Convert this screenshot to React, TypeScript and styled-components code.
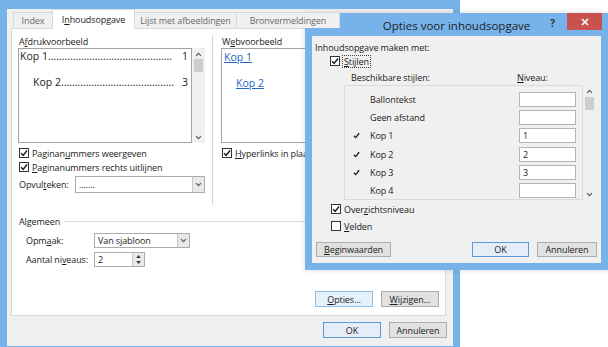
import React from 'react';
import styled, { createGlobalStyle } from 'styled-components';

const FRAME = '#77b3ea';

const GlobalStyle = createGlobalStyle`
  html, body { margin: 0; padding: 0; background: #fff; }
  body {
    font-family: "Open Sans", "Noto Sans", sans-serif;
    font-size: 9px;
    letter-spacing: -0.1px;
    color: #1b1b1b;
    overflow: hidden;
  }
  * { box-sizing: border-box; }
`;

const Page = styled.div`
  position: relative;
  width: 608px;
  height: 347px;
  overflow: hidden;
  background: #fff;
`;

/* ---------- main dialog ---------- */
const MainWindow = styled.div`
  width: 460px;
  height: 347px;
  background: ${FRAME};
  padding: 9px 7px 1px 7px;
  display: flex;
`;

const MainBody = styled.div`
  flex: 1;
  min-width: 0;
  background: #f0f0f0;
  display: flex;
  flex-direction: column;
  padding: 0 7px 0 4px;
`;

const TabStrip = styled.div`
  display: flex;
  align-items: flex-start;
  height: 20px;
  margin-bottom: -1px;
  padding-left: 2px;
  position: relative;
  z-index: 1;
`;

const Tab = styled.div<{ $w: number; $active?: boolean }>`
  width: ${(p) => p.$w}px;
  height: ${(p) => (p.$active ? 20 : 16)}px;
  margin-top: ${(p) => (p.$active ? 0 : 3)}px;
  background: ${(p) => (p.$active ? '#fff' : '#f0f0f0')};
  border: 1px solid #d9d9d9;
  border-bottom: none;
  margin-right: -1px;
  display: flex;
  align-items: center;
  justify-content: center;
  color: ${(p) => (p.$active ? '#1b1b1b' : '#6a6a6a')};
  white-space: nowrap;
  overflow: hidden;
  flex: none;
`;

const Panel = styled.div`
  height: 288px;
  background: #fff;
  border: 1px solid #d9d9d9;
  display: flex;
  flex-direction: column;
  padding: 6px 6px 8px 6px;
  overflow: hidden;
`;

const TopSection = styled.div`
  display: flex;
  height: 170px;
`;

const LeftCol = styled.div`
  width: 187px;
  flex: none;
  display: flex;
  flex-direction: column;
`;

const VSep = styled.div`
  width: 1px;
  flex: none;
  background: #d5d5d5;
  margin: 0 8px 0 7px;
`;

const RightCol = styled.div`
  flex: 1;
  display: flex;
  flex-direction: column;
  min-width: 0;
  overflow: hidden;
`;

const SectionLabel = styled.div`
  height: 13px;
  line-height: 13px;
  padding-left: 1px;
  white-space: nowrap;
`;

const U = styled.span`
  text-decoration: underline;
  text-underline-offset: 1px;
`;

const PreviewWrap = styled.div`
  height: 95px;
  display: flex;
`;

const PreviewArea = styled.div`
  flex: 1;
  border: 1px solid #a3a3a3;
  padding: 0 3px 0 1px;
  font-size: 10.5px;
  letter-spacing: 0;
  color: #222;
  overflow: hidden;
`;

const TocLine = styled.div<{ $indent: number; $gap: number }>`
  display: flex;
  height: 14px;
  line-height: 14px;
  margin-top: ${(p) => p.$gap}px;
  padding-left: ${(p) => p.$indent}px;
  white-space: nowrap;
`;

const Leader = styled.span`
  margin-right: auto;
`;

const ScrollCol = styled.div<{ $h: number }>`
  width: 13px;
  flex: none;
  height: ${(p) => p.$h}px;
  background: #f0f0f0;
  display: flex;
  flex-direction: column;
  align-items: center;
  padding: 4px 0 3px;
`;

const Thumb = styled.div<{ $mt: number }>`
  width: 9px;
  height: 13px;
  background: #cdcdcd;
  margin-top: ${(p) => p.$mt}px;
`;

const Spring = styled.div`
  flex: 1;
`;

const WebArea = styled.div`
  height: 95px;
  border: 1px solid #a3a3a3;
  border-right: none;
  padding: 0 0 0 1px;
  font-size: 10.5px;
  letter-spacing: 0;
`;

const WebLink = styled.div<{ $indent: number; $gap: number }>`
  height: 14px;
  line-height: 14px;
  margin-top: ${(p) => p.$gap}px;
  padding-left: ${(p) => p.$indent}px;
  color: #2367c4;
  text-decoration: underline;
  text-underline-offset: 1px;
`;

const CheckRow = styled.label<{ $mt?: number; $ml?: number }>`
  display: flex;
  align-items: center;
  height: 14px;
  margin-top: ${(p) => p.$mt ?? 0}px;
  margin-left: ${(p) => p.$ml ?? 1}px;
  white-space: nowrap;
`;

const Box = styled.span`
  width: 10px;
  height: 10px;
  border: 1px solid #333;
  background: #fff;
  display: flex;
  align-items: center;
  justify-content: center;
  margin-right: 3px;
  flex: none;
`;

const Focus = styled.span`
  outline: 1px dotted #444;
  outline-offset: 0;
  padding: 0 1px;
  line-height: 11px;
`;

const FieldRow = styled.div<{ $mt: number; $h: number; $ml: number; $lw: number }>`
  display: flex;
  align-items: center;
  height: ${(p) => p.$h}px;
  margin-top: ${(p) => p.$mt}px;
  padding-left: ${(p) => p.$ml}px;
  & > span:first-child {
    width: ${(p) => p.$lw}px;
    flex: none;
    white-space: nowrap;
  }
`;

const Select = styled.div<{ $w?: number }>`
  ${(p) => (p.$w ? `width: ${p.$w}px;` : 'flex: 1;')}
  height: 100%;
  border: 1px solid #acacac;
  background: #fff;
  display: flex;
  align-items: center;
  padding-left: 3px;
`;

const SelectText = styled.span`
  flex: 1;
  white-space: nowrap;
`;

const SelectBtn = styled.span`
  width: 12px;
  height: 100%;
  border-left: 1px solid #c8c8c8;
  background: #e9e9e9;
  display: flex;
  align-items: center;
  justify-content: center;
`;

const SpinBtns = styled.span`
  width: 12px;
  height: 100%;
  border-left: 1px solid #c8c8c8;
  background: #e9e9e9;
  display: flex;
  flex-direction: column;
  align-items: center;
  justify-content: space-evenly;
`;

const GroupHeader = styled.div`
  display: flex;
  align-items: center;
  height: 13px;
  margin-top: 10px;
  padding-left: 1px;
  &::after {
    content: '';
    flex: 1;
    height: 1px;
    background: #dcdcdc;
    margin-left: 4px;
  }
`;

const ButtonRow = styled.div<{ $pt?: number }>`
  display: flex;
  justify-content: flex-end;
  align-items: flex-start;
  gap: 8px;
  padding-top: ${(p) => p.$pt ?? 0}px;
`;

const Btn = styled.div<{ $w: number; $h?: number; $variant?: 'default' | 'hover' }>`
  width: ${(p) => p.$w}px;
  height: ${(p) => p.$h ?? 16}px;
  display: flex;
  align-items: center;
  justify-content: center;
  white-space: nowrap;
  background: ${(p) => (p.$variant === 'hover' ? '#e5f1fb' : p.$variant === 'default' ? '#e5eef8' : '#e1e1e1')};
  border: 1px solid
    ${(p) => (p.$variant === 'hover' ? '#8fbde8' : p.$variant === 'default' ? '#5a9bdc' : '#adadad')};
  color: #1b1b1b;
`;

const Footer = styled.div`
  height: 30px;
  margin-right: -1px;
`;

/* ---------- options dialog ---------- */
const OptionsWindow = styled.div`
  position: absolute;
  left: 305px;
  top: 13px;
  width: 303px;
  height: 257px;
  background: ${FRAME};
  padding: 0 7px 7px 7px;
  display: flex;
  flex-direction: column;
  box-shadow: 0 0 6px rgba(0, 0, 0, 0.15);
`;

const TitleBar = styled.div`
  position: relative;
  height: 23px;
  display: flex;
  align-items: center;
  justify-content: center;
  font-size: 11.5px;
  letter-spacing: 0;
  color: #1e1e1e;
  padding-top: 1px;
`;

const HelpMark = styled.span`
  position: absolute;
  right: 46px;
  top: 3px;
  font-size: 10px;
  font-weight: 700;
  color: #333;
`;

const CloseBtn = styled.div`
  position: absolute;
  right: -1px;
  top: 0;
  width: 35px;
  height: 17px;
  background: #c9514e;
  display: flex;
  align-items: center;
  justify-content: center;
`;

const OptionsBody = styled.div`
  flex: 1;
  background: #f0f0f0;
  display: flex;
  flex-direction: column;
  padding: 5px 4px 6px 3px;
`;

const PlainLine = styled.div`
  height: 13px;
  line-height: 13px;
  white-space: nowrap;
`;

const ListHeader = styled.div`
  display: flex;
  height: 14px;
  align-items: center;
  margin-top: 2px;
  padding-left: 36px;
  & > span:first-child {
    width: 166px;
  }
`;

const ListArea = styled.div`
  display: flex;
  margin-top: 1px;
  height: 115px;
  padding-left: 29px;
`;

const ListBox = styled.div`
  width: 239px;
  border: 1px solid #dadada;
  background: #f0f0f0;
  padding-top: 4px;
`;

const StyleRow = styled.div`
  display: flex;
  align-items: center;
  height: 18.3px;
  padding-left: 8px;
  & > span:nth-child(2) {
    flex: 1;
  }
`;

const CheckSlot = styled.span`
  width: 17px;
  display: flex;
  align-items: center;
`;

const LevelInput = styled.span`
  width: 57px;
  height: 15px;
  margin-right: 6px;
  border: 1px solid #b5b5b5;
  background: #fff;
  padding-left: 3px;
  display: flex;
  align-items: center;
`;

const CheckSvg = ({ size = 8 }: { size?: number }) => (
  <svg width={size} height={size} viewBox="0 0 10 10">
    <path d="M1.3 5.3 L3.9 8 L8.8 1.8" fill="none" stroke="#1b1b1b" strokeWidth="1.8" />
  </svg>
);

const Chevron = ({ dir = 'down', color = '#5a5a5a' }: { dir?: 'up' | 'down'; color?: string }) => (
  <svg width={7} height={5} viewBox="0 0 10 6">
    <polyline
      points={dir === 'down' ? '1.5,1 5,4.6 8.5,1' : '1.5,5 5,1.4 8.5,5'}
      fill="none"
      stroke={color}
      strokeWidth="1.7"
    />
  </svg>
);

const Tri = ({ dir }: { dir: 'up' | 'down' }) => (
  <svg width={5} height={3} viewBox="0 0 6 4">
    <polygon points={dir === 'up' ? '0,4 3,0 6,4' : '0,0 6,0 3,4'} fill="#333" />
  </svg>
);

const CheckBox = ({ checked }: { checked: boolean }) => (
  <Box>{checked && <CheckSvg />}</Box>
);

const styles: { name: string; level: string; on: boolean }[] = [
  { name: 'Ballontekst', level: '', on: false },
  { name: 'Geen afstand', level: '', on: false },
  { name: 'Kop 1', level: '1', on: true },
  { name: 'Kop 2', level: '2', on: true },
  { name: 'Kop 3', level: '3', on: true },
  { name: 'Kop 4', level: '', on: false },
];

export default function App() {
  return (
    <Page>
      <GlobalStyle />
      <MainWindow>
        <MainBody>
          <TabStrip>
            <Tab $w={40}>Index</Tab>
            <Tab $w={83} $active>
              I<U>n</U>houdsopgave
            </Tab>
            <Tab $w={103}>Lijst met afbeeldingen</Tab>
            <Tab $w={104}>Bronvermeldingen</Tab>
          </TabStrip>
          <Panel>
            <TopSection>
              <LeftCol>
                <SectionLabel>
                  A<U>f</U>drukvoorbeeld
                </SectionLabel>
                <PreviewWrap>
                  <PreviewArea>
                    <TocLine $indent={0} $gap={0}>
                      <span>Kop 1</span>
                      <Leader>{'.'.repeat(45)}</Leader>
                      <span>1</span>
                    </TocLine>
                    <TocLine $indent={13} $gap={12}>
                      <span>Kop 2</span>
                      <Leader>{'.'.repeat(41)}</Leader>
                      <span>3</span>
                    </TocLine>
                  </PreviewArea>
                  <ScrollCol $h={95}>
                    <Chevron dir="up" />
                    <Thumb $mt={2} />
                    <Spring />
                    <Chevron dir="down" />
                  </ScrollCol>
                </PreviewWrap>
                <CheckRow $mt={3}>
                  <CheckBox checked />
                  <span>
                    Paginan<U>u</U>mmers weergeven
                  </span>
                </CheckRow>
                <CheckRow>
                  <CheckBox checked />
                  <span>
                    <U>P</U>aginanummers rechts uitlijnen
                  </span>
                </CheckRow>
                <FieldRow $mt={2} $h={17} $ml={1} $lw={56}>
                  <span>
                    Opvul<U>t</U>eken:
                  </span>
                  <Select>
                    <SelectText>.......</SelectText>
                    <SelectBtn>
                      <Chevron dir="down" />
                    </SelectBtn>
                  </Select>
                </FieldRow>
              </LeftCol>
              <VSep />
              <RightCol>
                <SectionLabel>
                  W<U>e</U>bvoorbeeld
                </SectionLabel>
                <WebArea>
                  <WebLink $indent={1} $gap={1}>Kop 1</WebLink>
                  <WebLink $indent={13} $gap={12}>Kop 2</WebLink>
                </WebArea>
                <CheckRow $mt={3}>
                  <CheckBox checked />
                  <span>
                    <U>H</U>yperlinks in plaats van paginanummers gebruiken
                  </span>
                </CheckRow>
              </RightCol>
            </TopSection>
            <GroupHeader>Algemeen</GroupHeader>
            <FieldRow $mt={5} $h={15} $ml={8} $lw={68}>
              <span>
                Opm<U>a</U>ak:
              </span>
              <Select $w={96}>
                <SelectText>Van sjabloon</SelectText>
                <SelectBtn>
                  <Chevron dir="down" />
                </SelectBtn>
              </Select>
            </FieldRow>
            <FieldRow $mt={4} $h={15} $ml={8} $lw={68}>
              <span>
                Aantal ni<U>v</U>eaus:
              </span>
              <Select $w={51}>
                <SelectText>2</SelectText>
                <SpinBtns>
                  <Tri dir="up" />
                  <Tri dir="down" />
                </SpinBtns>
              </Select>
            </FieldRow>
            <Spring />
            <ButtonRow>
              <Btn $w={58} $variant="hover">
                <span>
                  <U>O</U>pties...
                </span>
              </Btn>
              <Btn $w={58}>
                <span>
                  <U>W</U>ijzigen...
                </span>
              </Btn>
            </ButtonRow>
          </Panel>
          <Footer>
            <ButtonRow $pt={6}>
              <Btn $w={58} $variant="default">OK</Btn>
              <Btn $w={58}>Annuleren</Btn>
            </ButtonRow>
          </Footer>
        </MainBody>
      </MainWindow>

      <OptionsWindow>
        <TitleBar>
          Opties voor inhoudsopgave
          <HelpMark>?</HelpMark>
          <CloseBtn>
            <svg width={8} height={8} viewBox="0 0 8 8">
              <path d="M1 1 L7 7 M7 1 L1 7" stroke="#fff" strokeWidth="1.6" />
            </svg>
          </CloseBtn>
        </TitleBar>
        <OptionsBody>
          <PlainLine>Inhoudsopgave maken met:</PlainLine>
          <CheckRow $ml={15}>
            <CheckBox checked />
            <Focus>
              <U>S</U>tijlen
            </Focus>
          </CheckRow>
          <ListHeader>
            <span>Beschikbare stijlen:</span>
            <span>
              <U>N</U>iveau:
            </span>
          </ListHeader>
          <ListArea>
            <ListBox>
              {styles.map((s) => (
                <StyleRow key={s.name}>
                  <CheckSlot>{s.on && <CheckSvg size={7} />}</CheckSlot>
                  <span>{s.name}</span>
                  <LevelInput>{s.level}</LevelInput>
                </StyleRow>
              ))}
            </ListBox>
            <ScrollCol $h={115}>
              <Chevron dir="up" />
              <Thumb $mt={3} />
              <Spring />
              <Chevron dir="down" />
            </ScrollCol>
          </ListArea>
          <CheckRow $mt={2} $ml={16}>
            <CheckBox checked />
            <span>
              Over<U>z</U>ichtsniveau
            </span>
          </CheckRow>
          <CheckRow $mt={3} $ml={16}>
            <CheckBox checked={false} />
            <span>
              <U>V</U>elden
            </span>
          </CheckRow>
          <Spring />
          <ButtonRow>
            <Btn $w={75} $h={15} style={{ marginRight: 'auto', marginLeft: 1 }}>
              <span>
                <U>B</U>eginwaarden
              </span>
            </Btn>
            <Btn $w={57} $h={15} $variant="default">
              OK
            </Btn>
            <Btn $w={60} $h={15}>
              Annuleren
            </Btn>
          </ButtonRow>
        </OptionsBody>
      </OptionsWindow>
    </Page>
  );
}
